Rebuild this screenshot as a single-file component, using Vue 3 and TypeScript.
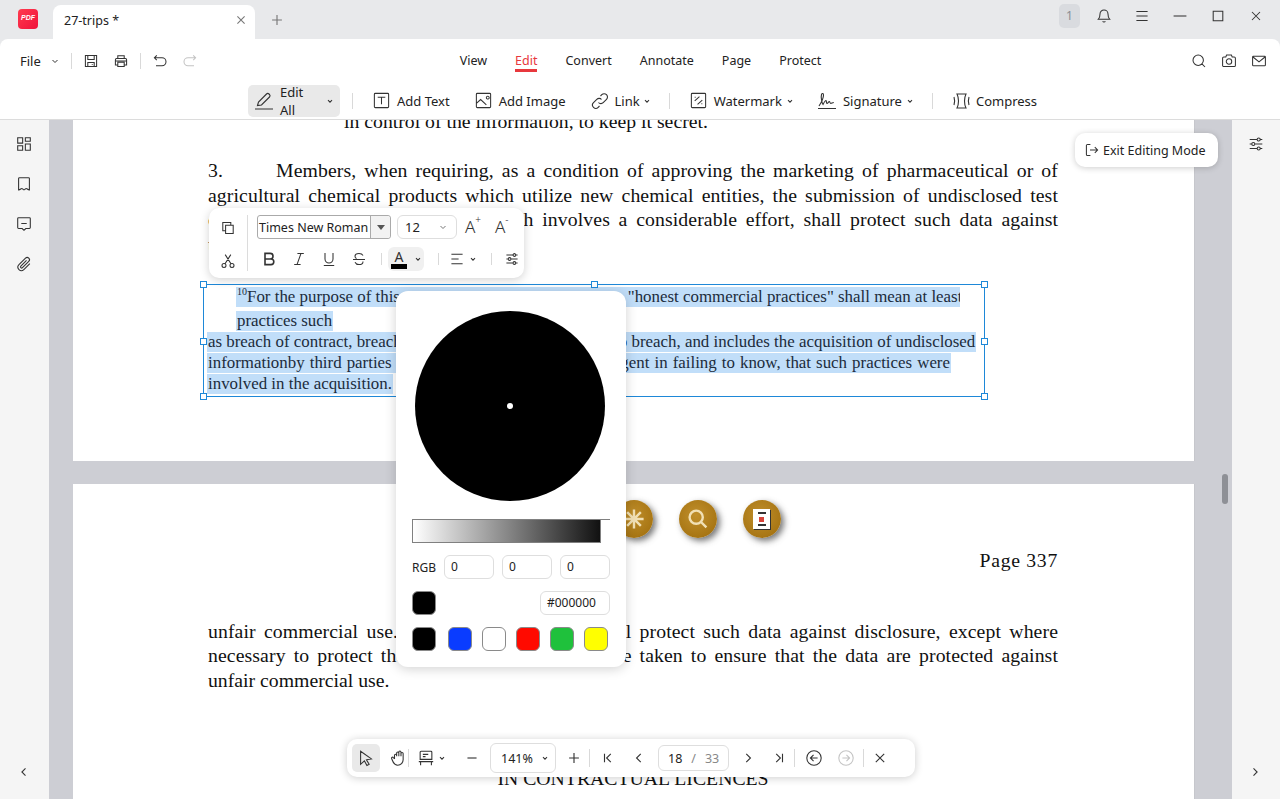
<script setup lang="ts">
// 图标路径，统一 20x20 画布
const icons: Record<string, string> = {
  save: 'M3 3h14v14H3zM6 3v5h8V3M6 17v-5h8v5M11 14.5h1',
  print: 'M6 7V3.5h8V7M3 8.5A1.5 1.5 0 0 1 4.5 7h11A1.5 1.5 0 0 1 17 8.5V15h-3M6 15H3V8.5M6 11.5h8V17H6zM3.5 10h13',
  undo: 'M6 3 3 6l3 3M3 6h9.5a4.5 4.5 0 0 1 0 10H5',
  redo: 'M14 3l3 3-3 3M17 6H7.5a4.5 4.5 0 0 0 0 10H15',
  bell: 'M10 2.5a5 5 0 0 0-5 5c0 4.5-2 6.5-2 6.5h14s-2-2-2-6.5a5 5 0 0 0-5-5zM8.3 16.5a2 2 0 0 0 3.4 0',
  menu: 'M3 4.5h14M3 10h14M3 15.500h14',
  search: 'M9 2.500a6.500 6.500 0 1 0 0 13 6.500 6.500 0 0 0 0-13zM13.700 13.700 17.500 17.500',
  camera: 'M3.500 5H6l1-2.500h6L14 5h2.500A1.500 1.500 0 0 1 18 6.500v9a1.500 1.500 0 0 1-1.500 1.500h-13A1.500 1.500 0 0 1 2 15.500v-9A1.500 1.500 0 0 1 3.500 5zM10 7.300a3.400 3.400 0 1 0 0 6.800 3.400 3.400 0 0 0 0-6.800z',
  mail: 'M3 4h14a1 1 0 0 1 1 1v10a1 1 0 0 1-1 1H3a1 1 0 0 1-1-1V5a1 1 0 0 1 1-1zM2.500 5 10 11l7.500-6',
  pen: 'M3.500 14.500 4.500 11 12.500 3a1.800 1.800 0 0 1 2.500 0l.5.5a1.800 1.800 0 0 1 0 2.500L7.500 14zM1 18h18',
  addText: 'M3.500 2.500h13a1 1 0 0 1 1 1v13a1 1 0 0 1-1 1h-13a1 1 0 0 1-1-1v-13a1 1 0 0 1 1-1zM6 6.500h8M10 6.500V14',
  addImage: 'M3.500 2.500h13a1 1 0 0 1 1 1v13a1 1 0 0 1-1 1h-13a1 1 0 0 1-1-1v-13a1 1 0 0 1 1-1zM2.500 13l4.500-4 6 5.500M13 7a1.500 1.500 0 1 0 0-.01',
  link: 'M8.500 11.500a3.200 3.200 0 0 0 4.700.2l3.300-3.300a3.300 3.300 0 0 0-4.700-4.700L10.500 5M11.500 8.500a3.200 3.200 0 0 0-4.700-.2l-3.300 3.300a3.300 3.300 0 0 0 4.700 4.700L9.500 15',
  watermark: 'M3.500 2.500h13a1 1 0 0 1 1 1v13a1 1 0 0 1-1 1h-13a1 1 0 0 1-1-1v-13a1 1 0 0 1 1-1zM6 10.500 11 6M9 14l5-4.500M6 6.500h1M13 13.500h1',
  sign: 'M1 17.500h18M2 15c2-3 4.500-8 4.500-11 0-2-1.500-2-2-.5-.7 2.500.3 8.500 1.500 10 .8-1.500 2-4 3-4 .8 0 0 3 1 3s1.500-2 2.300-2 .5 2 1.500 2 1.500-1 3-1',
  compress: 'M6 3h9c-1 2-1.500 4.500-1.500 7s.5 5 1.500 7H6c1-2 1.500-4.500 1.500-7S7 5 6 3zM3 6c.8 2.500.8 5.500 0 8M18 6c-.8 2.500-.8 5.500 0 8',
  exit: 'M8 3H4.500A1.500 1.500 0 0 0 3 4.500v11A1.500 1.500 0 0 0 4.500 17H8M7.500 10H17M13.500 6.500 17 10l-3.500 3.500',
  sliders: 'M3 5h8M15 5h2M3 10h2M9 10h8M3 15h8M15 15h2M13 3.300a1.700 1.700 0 1 0 0 3.400 1.700 1.700 0 0 0 0-3.400zM7 8.300a1.700 1.700 0 1 0 0 3.400 1.700 1.700 0 0 0 0-3.400zM13 13.300a1.700 1.700 0 1 0 0 3.400 1.700 1.700 0 0 0 0-3.400z',
  thumbs: 'M3 3h5.500v6H3zM11.500 3H17v4h-5.500zM3 12h5.500v5H3zM11.500 10H17v7h-5.500z',
  bookmark: 'M4 4a1 1 0 0 1 1-1h10a1 1 0 0 1 1 1v12.500c-2 0-2.500-1.500-3.500-1.500s-1.500 1.500-2.500 1.500-1.500-1.500-2.500-1.500S6 16.500 4 16.500z',
  comment: 'M4 3h12a1 1 0 0 1 1 1v10a1 1 0 0 1-1 1h-4l-2 2-2-2H4a1 1 0 0 1-1-1V4a1 1 0 0 1 1-1zM7 9.500h6',
  clip: 'M16.500 9.500 9.800 16.200a3.800 3.800 0 0 1-5.400-5.400l7.300-7.300a2.500 2.500 0 0 1 3.600 3.600l-7 7a1.200 1.200 0 0 1-1.800-1.800l6.300-6.200',
  copy: 'M7 6.500h9.500V17H7zM13.500 6.500V3H3.500v10.500H7',
  cut: 'M5 13a2.500 2.500 0 1 0 0 5 2.500 2.500 0 0 0 0-5zM15 13a2.500 2.500 0 1 0 0 5 2.500 2.500 0 0 0 0-5zM6.300 13.500 13.500 2M13.700 13.500 6.500 2',
  bold: 'M5 3h6.500a3.500 3.500 0 0 1 0 7H5zM5 10h7.500a3.500 3.500 0 0 1 0 7H5z',
  italic: 'M8 3h8M4 17h8M12.500 3 7.500 17',
  underline: 'M5 2.500v7.500a5 5 0 0 0 10 0V2.500M3.500 18h13',
  strike: 'M15 5.500C14 3.500 12 3 10 3 7 3 5 4.500 5 6.500c0 1.300.7 2.500 2 3M2.500 10.500h15M15 13c0 2.500-2 4-5 4-2.200 0-4-1-5-3',
  align: 'M3 4h14M3 10h9M3 16h14',
  cursor: 'M4 2.500 16 11l-5.500 1 3 5-2.500 1.300-2.800-5.200L4 17z',
  hand: 'M5 11V7a1.200 1.200 0 0 1 2.400 0M7.400 8V4.500a1.200 1.200 0 0 1 2.400 0V8M9.800 8V3.500a1.200 1.200 0 0 1 2.400 0V8M12.200 8V5a1.200 1.200 0 0 1 2.400 0V12a6 6 0 0 1-6 6c-3 0-4.500-1.500-6-5.500l-.8-2c-.4-1.200 1.300-2 2.100-.8L5 11',
  view: 'M4.500 2.500h11a1 1 0 0 1 1 1v8h-13v-8a1 1 0 0 1 1-1zM6.500 6h6M6.500 8.500h3M2 14h16M4 14v4M16 14v4',
  minus: 'M3.500 10h13',
  plus: 'M3 10h14M10 3v14',
  first: 'M5 4v12M14 4l-6 6 6 6',
  prev: 'M12.500 4l-6 6 6 6',
  next: 'M7.500 4l6 6-6 6',
  last: 'M15 4v12M6 4l6 6-6 6',
  back: 'M10 2a8 8 0 1 0 0 16 8 8 0 0 0 0-16zM14 10H6.500M9.500 6.500 6 10l3.500 3.500',
  forward: 'M10 2a8 8 0 1 0 0 16 8 8 0 0 0 0-16zM6 10h7.500M10.500 6.500 14 10l-3.500 3.500',
  close: 'M4 4l12 12M16 4 4 16',
  chevron: 'M5 8l5 5 5-5',
};

const tabs = ['View', 'Edit', 'Convert', 'Annotate', 'Page', 'Protect'];

// 文本框里的选中行，宽度取自原文排版
const boxLines = [
  { sup: '10', text: 'For the purpose of this provision, "a manner contrary to "honest commercial practices" shall mean at least', width: 724, indent: 29, gap: 0 },
  { sup: '', text: 'practices such', width: 97, indent: 29, gap: 4 },
  { sup: '', text: 'as breach of contract, breach of confidence and inducement to breach, and includes the acquisition of undisclosed', width: 769, indent: 0, gap: 1 },
  { sup: '', text: 'informationby third parties who knew, or were grossly negligent in failing to know, that such practices were', width: 744, indent: 0, gap: 1 },
  { sup: '', text: 'involved in the acquisition.', width: 186, indent: 0, gap: 1 },
];

const handles = ['tl', 'tc', 'tr', 'ml', 'mr', 'bl', 'bc', 'br'];
const swatches = ['#000000', '#0a3cff', '#ffffff', '#ff0a00', '#1fc13c', '#ffff00'];
</script>

<template>
  <div class="app">
    <!-- 标题栏 -->
    <header class="titlebar">
      <div class="logo"><span>PDF</span></div>
      <div class="tab">
        <span>27-trips *</span>
        <svg class="ic ic-12 muted" viewBox="0 0 20 20"><path :d="icons.close" /></svg>
      </div>
      <svg class="ic ic-14 new-tab muted" viewBox="0 0 20 20"><path :d="icons.plus" /></svg>
      <div class="win-btns">
        <span class="badge">1</span>
        <svg class="ic ic-16" viewBox="0 0 20 20"><path :d="icons.bell" /></svg>
        <svg class="ic ic-16" viewBox="0 0 20 20"><path :d="icons.menu" /></svg>
        <svg class="ic ic-16" viewBox="0 0 20 20"><path d="M2 10h16" /></svg>
        <svg class="ic ic-16" viewBox="0 0 20 20"><path d="M4 4h12v12H4z" /></svg>
        <svg class="ic ic-16" viewBox="0 0 20 20"><path d="M5 5l10 10M15 5 5 15" /></svg>
      </div>
    </header>

    <!-- 工具栏 -->
    <section class="toolbar">
      <div class="row-top">
        <div class="quick">
          <span class="file">File</span>
          <svg class="ic ic-10 chev-file" viewBox="0 0 20 20"><path :d="icons.chevron" /></svg>
          <i class="sep"></i>
          <svg class="ic ic-16" viewBox="0 0 20 20"><path :d="icons.save" /></svg>
          <svg class="ic ic-16" viewBox="0 0 20 20"><path :d="icons.print" /></svg>
          <i class="sep"></i>
          <svg class="ic ic-16" viewBox="0 0 20 20"><path :d="icons.undo" /></svg>
          <svg class="ic ic-16 disabled" viewBox="0 0 20 20"><path :d="icons.redo" /></svg>
        </div>
        <nav class="tabs">
          <span v-for="t in tabs" :key="t" :class="['nav-tab', { active: t === 'Edit' }]">{{ t }}</span>
        </nav>
        <div class="tools-right">
          <svg class="ic ic-16" viewBox="0 0 20 20"><path :d="icons.search" /></svg>
          <svg class="ic ic-16" viewBox="0 0 20 20"><path :d="icons.camera" /></svg>
          <svg class="ic ic-16" viewBox="0 0 20 20"><path :d="icons.mail" /></svg>
        </div>
      </div>
      <div class="row-edit">
        <div class="edit-all">
          <svg class="ic ic-20" viewBox="0 0 20 20"><path :d="icons.pen" /></svg>
          <span>Edit All</span>
          <svg class="ic ic-8" viewBox="0 0 20 20"><path :d="icons.chevron" /></svg>
        </div>
        <i class="sep sep-a"></i>
        <div class="tool t-text"><svg class="ic ic-19" viewBox="0 0 20 20"><path :d="icons.addText" /></svg><span>Add Text</span></div>
        <div class="tool t-image"><svg class="ic ic-19" viewBox="0 0 20 20"><path :d="icons.addImage" /></svg><span>Add Image</span></div>
        <div class="tool t-link"><svg class="ic ic-20" viewBox="0 0 20 20"><path :d="icons.link" /></svg><span>Link</span><svg class="ic ic-8 c" viewBox="0 0 20 20"><path :d="icons.chevron" /></svg></div>
        <i class="sep sep-b"></i>
        <div class="tool t-water"><svg class="ic ic-19" viewBox="0 0 20 20"><path :d="icons.watermark" /></svg><span>Watermark</span><svg class="ic ic-8 c" viewBox="0 0 20 20"><path :d="icons.chevron" /></svg></div>
        <div class="tool t-sign"><svg class="ic ic-20" viewBox="0 0 20 20"><path :d="icons.sign" /></svg><span>Signature</span><svg class="ic ic-8 c" viewBox="0 0 20 20"><path :d="icons.chevron" /></svg></div>
        <i class="sep sep-c"></i>
        <div class="tool t-comp"><svg class="ic ic-20" viewBox="0 0 20 20"><path :d="icons.compress" /></svg><span>Compress</span></div>
      </div>
    </section>

    <main class="main">
      <aside class="side side-left">
        <div class="side-icons">
          <svg class="ic ic-18" viewBox="0 0 20 20"><path :d="icons.thumbs" /></svg>
          <svg class="ic ic-18" viewBox="0 0 20 20"><path :d="icons.bookmark" /></svg>
          <svg class="ic ic-18" viewBox="0 0 20 20"><path :d="icons.comment" /></svg>
          <svg class="ic ic-18" viewBox="0 0 20 20"><path :d="icons.clip" /></svg>
        </div>
        <svg class="ic ic-12 side-arrow" viewBox="0 0 20 20"><path :d="icons.prev" /></svg>
      </aside>

      <div class="doc">
        <article class="page page-one">
          <p class="line first-line">in control of the information, to keep it secret.</p>
          <p class="line just para"><span class="num">3.</span>Members, when requiring, as a condition of approving the marketing of pharmaceutical or of</p>
          <p class="line just">agricultural chemical products which utilize new chemical entities, the submission of undisclosed test</p>
          <p class="line just">or other data, the origination of which involves a considerable effort, shall protect such data against</p>
          <p class="line">unfair commercial use.</p>

          <div class="textbox">
            <span v-for="h in handles" :key="h" :class="['handle', h]"></span>
            <div
              v-for="(l, i) in boxLines"
              :key="i"
              class="sel-line"
              :style="{ width: l.width + 'px', marginLeft: l.indent + 'px', marginTop: l.gap + 'px' }"
            ><sup v-if="l.sup">{{ l.sup }}</sup>{{ l.text }}</div>
          </div>
        </article>

        <article class="page page-two">
          <div class="gold-row">
            <span class="gold"></span>
            <span class="gold"></span>
            <span class="gold">
              <svg viewBox="0 0 20 20" class="gold-ic"><path d="M10 2v16M2 10h16M4.300 4.300l11.400 11.400M15.700 4.300 4.300 15.700" /></svg>
            </span>
            <span class="gold">
              <svg viewBox="0 0 20 20" class="gold-ic"><path d="M8.500 3a5.500 5.500 0 1 0 0 11 5.500 5.500 0 0 0 0-11zM12.500 12.500 17 17" /></svg>
            </span>
            <span class="gold">
              <span class="gold-card"><i></i><b></b><i></i></span>
            </span>
          </div>
          <p class="line page-no">Page 337</p>
          <p class="line just second-start">unfair commercial use. In addition, Members shall protect such data against disclosure, except where</p>
          <p class="line just">necessary to protect the public, or unless steps are taken to ensure that the data are protected against</p>
          <p class="line">unfair commercial use.</p>
          <p class="line section">SECTION 8: CONTROL OF ANTI-COMPETITIVE PRACTICES</p>
          <p class="line section">IN CONTRACTUAL LICENCES</p>
        </article>
      </div>

      <div class="scroll-thumb"></div>

      <aside class="side side-right">
        <div class="side-icons">
          <svg class="ic ic-18" viewBox="0 0 20 20"><path :d="icons.sliders" /></svg>
        </div>
        <svg class="ic ic-12 side-arrow" viewBox="0 0 20 20"><path :d="icons.next" /></svg>
      </aside>

      <!-- 退出编辑 -->
      <div class="exit-btn">
        <svg class="ic ic-16" viewBox="0 0 20 20"><path :d="icons.exit" /></svg>
        <span>Exit Editing Mode</span>
      </div>

      <!-- 字体浮动工具条 -->
      <div class="font-bar">
        <div class="fb-left">
          <svg class="ic ic-16" viewBox="0 0 20 20"><path :d="icons.copy" /></svg>
          <svg class="ic ic-16" viewBox="0 0 20 20"><path :d="icons.cut" /></svg>
        </div>
        <div class="fb-right">
          <div class="fb-row">
            <div class="combo"><span>Times New Roman</span><b><i></i></b></div>
            <div class="size"><span>12</span><svg class="ic ic-10 muted" viewBox="0 0 20 20"><path :d="icons.chevron" /></svg></div>
            <span class="grow">A<sup>+</sup></span>
            <span class="grow">A<sup>-</sup></span>
          </div>
          <div class="fb-row fb-row2">
            <svg class="ic ic-16 strong" viewBox="0 0 20 20"><path :d="icons.bold" /></svg>
            <svg class="ic ic-16" viewBox="0 0 20 20"><path :d="icons.italic" /></svg>
            <svg class="ic ic-16" viewBox="0 0 20 20"><path :d="icons.underline" /></svg>
            <svg class="ic ic-16" viewBox="0 0 20 20"><path :d="icons.strike" /></svg>
            <i class="sep sep-s"></i>
            <div class="color-btn">
              <span class="color-a">A<i></i></span>
              <svg class="ic ic-8" viewBox="0 0 20 20"><path :d="icons.chevron" /></svg>
            </div>
            <i class="sep sep-s"></i>
            <div class="align-btn">
              <svg class="ic ic-16" viewBox="0 0 20 20"><path :d="icons.align" /></svg>
              <svg class="ic ic-8" viewBox="0 0 20 20"><path :d="icons.chevron" /></svg>
            </div>
            <i class="sep sep-s"></i>
            <svg class="ic ic-16" viewBox="0 0 20 20"><path :d="icons.sliders" /></svg>
          </div>
        </div>
      </div>

      <!-- 取色器 -->
      <div class="picker">
        <div class="wheel"><i></i></div>
        <div class="shade"><div class="shade-bar"></div></div>
        <div class="rgb">
          <span>RGB</span>
          <div class="field">0</div>
          <div class="field">0</div>
          <div class="field">0</div>
        </div>
        <div class="current">
          <span class="swatch" style="background: #000000"></span>
          <div class="field hex">#000000</div>
        </div>
        <div class="swatches">
          <span v-for="c in swatches" :key="c" class="swatch" :style="{ background: c }"></span>
        </div>
      </div>

      <!-- 底部页面工具条 -->
      <div class="page-bar">
        <span class="pb-btn on"><svg class="ic ic-18" viewBox="0 0 20 20"><path :d="icons.cursor" /></svg></span>
        <svg class="ic ic-18 pb-hand" viewBox="0 0 20 20"><path :d="icons.hand" /></svg>
        <i class="sep sep-p"></i>
        <svg class="ic ic-18 pb-view" viewBox="0 0 20 20"><path :d="icons.view" /></svg>
        <svg class="ic ic-8 pb-chev" viewBox="0 0 20 20"><path :d="icons.chevron" /></svg>
        <svg class="ic ic-14 pb-minus" viewBox="0 0 20 20"><path :d="icons.minus" /></svg>
        <div class="zoom-box"><span>141%</span><svg class="ic ic-8" viewBox="0 0 20 20"><path :d="icons.chevron" /></svg></div>
        <svg class="ic ic-14 pb-plus" viewBox="0 0 20 20"><path :d="icons.plus" /></svg>
        <i class="sep sep-p"></i>
        <svg class="ic ic-14 pb-first" viewBox="0 0 20 20"><path :d="icons.first" /></svg>
        <svg class="ic ic-14 pb-prev" viewBox="0 0 20 20"><path :d="icons.prev" /></svg>
        <div class="page-box"><span>18</span><em>/</em><em>33</em></div>
        <svg class="ic ic-14 pb-next" viewBox="0 0 20 20"><path :d="icons.next" /></svg>
        <svg class="ic ic-14 pb-last" viewBox="0 0 20 20"><path :d="icons.last" /></svg>
        <i class="sep sep-p"></i>
        <svg class="ic ic-18 pb-back" viewBox="0 0 20 20"><path :d="icons.back" /></svg>
        <svg class="ic ic-18 pb-fwd disabled" viewBox="0 0 20 20"><path :d="icons.forward" /></svg>
        <i class="sep sep-p"></i>
        <svg class="ic ic-14 pb-close" viewBox="0 0 20 20"><path :d="icons.close" /></svg>
      </div>
    </main>
  </div>
</template>

<style>
html,
body {
  margin: 0;
  background: #e8e9eb;
}
</style>

<style scoped>
.app {
  width: 1280px;
  height: 799px;
  overflow: hidden;
  display: flex;
  flex-direction: column;
  background: #e8e9eb;
  font-family: "Noto Sans", "Open Sans", sans-serif;
  font-size: 13px;
  color: #222;
}

.ic {
  fill: none;
  stroke: #333;
  stroke-width: 1.3;
  flex: none;
  display: block;
}
.ic-8 { width: 8px; height: 8px; stroke-width: 2.6; }
.ic-10 { width: 10px; height: 10px; stroke-width: 2; }
.ic-12 { width: 12px; height: 12px; stroke-width: 1.8; }
.ic-14 { width: 14px; height: 14px; stroke-width: 1.6; }
.ic-16 { width: 16px; height: 16px; }
.ic-18 { width: 18px; height: 18px; stroke-width: 1.2; }
.ic-19 { width: 19px; height: 19px; stroke-width: 1.1; }
.ic-20 { width: 20px; height: 20px; stroke-width: 1.1; }
.muted { stroke: #777; }
.disabled { stroke: #c4c4c4; }
.strong { stroke-width: 2; }

.sep {
  display: block;
  width: 1px;
  height: 16px;
  background: #d9d9d9;
  flex: none;
}

/* 标题栏 */
.titlebar {
  height: 39px;
  flex: none;
  display: flex;
  align-items: flex-end;
  padding-left: 18px;
}
.logo {
  width: 20px;
  height: 20px;
  margin-bottom: 10px;
  border-radius: 4px;
  background: linear-gradient(135deg, #ff3b4e, #f0123c);
  display: flex;
  align-items: center;
  justify-content: center;
}
.logo span {
  color: #fff;
  font: italic 700 7px "Liberation Sans", sans-serif;
  margin-top: -4px;
}
.tab {
  width: 202px;
  height: 34px;
  margin-left: 15px;
  box-sizing: border-box;
  padding: 0 8px 4px 11px;
  background: #fff;
  border-radius: 8px 8px 0 0;
  display: flex;
  align-items: center;
  justify-content: space-between;
  font-size: 12.5px;
}
.new-tab {
  margin: 0 0 12px 15px;
}
.win-btns {
  margin-left: auto;
  display: flex;
  align-items: center;
  height: 39px;
  padding-bottom: 8px;
  box-sizing: border-box;
  padding-right: 16px;
  gap: 22px;
}
.badge {
  width: 21px;
  height: 24px;
  border-radius: 5px;
  background: #d9dbdf;
  color: #8a8d93;
  font-size: 12px;
  display: flex;
  align-items: center;
  justify-content: center;
  margin-right: -6px;
}
.win-btns svg + svg { margin-left: 0; }

/* 工具栏 */
.toolbar {
  height: 81px;
  flex: none;
  box-sizing: border-box;
  background: #fff;
  border-bottom: 1px solid #dcdcdc;
  border-radius: 8px 8px 0 0;
}
.row-top {
  height: 43px;
  display: grid;
  grid-template-columns: 1fr auto 1fr;
  align-items: center;
}
.quick {
  display: flex;
  align-items: center;
  padding-left: 20px;
}
.file { margin-right: 9px; }
.quick .sep { margin: 0 11px 0 11px; }
.quick .ic-16 + .ic-16 { margin-left: 14px; }
.chev-file { margin-right: 0; }
.tabs {
  display: flex;
  gap: 28px;
  margin-left: 1px;
}
.nav-tab {
  position: relative;
  font-size: 12.5px;
}
.nav-tab.active { color: #e8383d; }
.nav-tab.active::after {
  content: "";
  position: absolute;
  left: 0;
  right: 0;
  bottom: -3px;
  height: 3px;
  background: #e8383d;
}
.tools-right {
  justify-self: end;
  display: flex;
  gap: 14px;
  padding-right: 13px;
}
.row-edit {
  height: 37px;
  display: flex;
  align-items: center;
  padding-left: 248px;
}
.edit-all {
  width: 92px;
  height: 32px;
  box-sizing: border-box;
  padding: 0 6px;
  border-radius: 5px;
  background: #e9e9e9;
  display: flex;
  align-items: center;
  gap: 6px;
}
.tool {
  display: flex;
  align-items: center;
  gap: 6px;
}
.tool .c { margin-left: -2px; }
.sep-a { margin: 0 10px 0 12px; height: 16px; }
.t-text { margin-left: 9px; }
.t-image { margin-left: 24px; }
.t-link { margin-left: 24px; gap: 5px; }
.sep-b { margin-left: 18px; }
.t-water { margin-left: 19px; gap: 6px; }
.t-sign { margin-left: 23px; }
.sep-c { margin-left: 18px; }
.t-comp { margin-left: 18px; gap: 5px; }

/* 主区 */
.main {
  position: relative;
  flex: 1;
  min-height: 0;
  display: flex;
}
.side {
  width: 48px;
  flex: none;
  background: #f5f5f5;
  position: relative;
}
.side-left { width: 49px; }
.side-icons {
  display: flex;
  flex-direction: column;
  align-items: center;
  gap: 22px;
  padding-top: 15px;
}
.side-left .side-icons { padding-right: 1px; }
.side-arrow {
  position: absolute;
  left: 50%;
  margin-left: -7px;
  bottom: 21px;
}
.doc {
  flex: 1;
  min-width: 0;
  background: #cdced4;
  padding: 0 37px 0 24px;
  overflow: hidden;
}
.page {
  background: #fff;
  box-sizing: border-box;
  padding: 0 136px 0 135px;
  font-family: "Liberation Serif", "Times New Roman", serif;
  font-size: 19.74px;
  color: #111;
  position: relative;
}
.page-one {
  height: 341px;
  overflow: hidden;
  border-right: 1px solid #c6c7cc;
}
.page-two {
  margin-top: 23px;
  height: 330px;
  overflow: hidden;
  border-right: 1px solid #c6c7cc;
}
.line {
  margin: 0;
  line-height: 24.5px;
  white-space: nowrap;
}
.just {
  white-space: normal;
  text-align: justify;
  text-align-last: justify;
  height: 24.5px;
  letter-spacing: 0.1px;
}
.first-line {
  margin-top: -11px;
  padding-left: 136px;
}
.para { margin-top: 24.5px; }
.num {
  display: inline-block;
  width: 68px;
  text-align-last: left;
}

/* 文本框 */
.textbox {
  position: relative;
  margin: 27.500px 0 0 -5px;
  width: 782px;
  height: 113px;
  box-sizing: border-box;
  border: 1px solid #1e88d8;
  padding: 2px 0 0 3px;
  font-size: 16.9px;
  color: #1c2c3c;
}
.sel-line {
  height: 20px;
  line-height: 20px;
  background: #c1def9;
  padding: 0 1px;
  box-sizing: border-box;
  text-align: justify;
  text-align-last: justify;
  white-space: nowrap;
  overflow: hidden;
}
.sel-line sup {
  font-size: 10px;
  line-height: 0;
}
.handle {
  position: absolute;
  width: 5px;
  height: 5px;
  background: #fff;
  border: 1px solid #1e88d8;
}
.tl, .tc, .tr { top: -4px; }
.ml, .mr { top: 53px; }
.bl, .bc, .br { bottom: -4px; }
.tl, .ml, .bl { left: -4px; }
.tc, .bc { left: 387px; }
.tr, .mr, .br { right: -4px; }

/* 第二页 */
.gold-row {
  display: flex;
  justify-content: center;
  gap: 26px;
  padding-top: 16px;
  margin: 0 -135px 0 -135px;
  padding-left: 1px;
}
.gold {
  width: 38px;
  height: 38px;
  border-radius: 50%;
  background: radial-gradient(circle at 45% 40%, #c08f2c, #a87614 70%, #8a5e0c);
  box-shadow: 3px 3px 6px rgba(60, 60, 60, 0.7);
  display: flex;
  align-items: center;
  justify-content: center;
}
.gold-ic {
  width: 24px;
  height: 24px;
  fill: none;
  stroke: #f1e0b5;
  stroke-width: 2;
}
.gold-card {
  width: 17px;
  height: 20px;
  background: #fff;
  box-shadow: 1px 1px 0 #333;
  display: flex;
  flex-direction: column;
  align-items: center;
  justify-content: space-between;
  padding: 3px 0;
  box-sizing: border-box;
}
.gold-card i {
  width: 8px;
  height: 2px;
  background: #333;
}
.gold-card b {
  width: 5px;
  height: 5px;
  background: #d8443a;
}
.page-no {
  margin-top: 9.500px;
  text-align: right;
  letter-spacing: 0.7px;
}
.second-start { margin-top: 46.500px; }
.section {
  text-align: center;
  margin: 0 -20px;
}
.section:nth-last-child(2) { margin-top: 49px; }

.scroll-thumb {
  position: absolute;
  left: 1222px;
  top: 354px;
  width: 6px;
  height: 30px;
  border-radius: 3px;
  background: #8e9096;
}

/* 退出编辑按钮 */
.exit-btn {
  position: absolute;
  left: 1075px;
  top: 13px;
  width: 143px;
  height: 34px;
  box-sizing: border-box;
  padding-left: 9px;
  display: flex;
  align-items: center;
  gap: 3px;
  background: #fff;
  border-radius: 10px;
  box-shadow: 0 1px 6px rgba(0, 0, 0, 0.2);
  font-size: 12.5px;
  white-space: nowrap;
}

/* 字体工具条 */
.font-bar {
  position: absolute;
  left: 209px;
  top: 88px;
  width: 315px;
  height: 70px;
  box-sizing: border-box;
  background: #fff;
  border-radius: 10px;
  box-shadow: 0 2px 10px rgba(0, 0, 0, 0.18);
  display: flex;
  padding-top: 7px;
}
.fb-left {
  width: 39px;
  height: 56px;
  border-right: 1px solid #dcdcdc;
  display: flex;
  flex-direction: column;
  align-items: center;
  justify-content: space-between;
  padding: 5px 0 2px;
  box-sizing: border-box;
  flex: none;
  margin-right: 9px;
}
.fb-right { flex: 1; }
.fb-row {
  display: flex;
  align-items: center;
  height: 24px;
}
.combo {
  width: 134px;
  height: 24px;
  box-sizing: border-box;
  border: 1px solid #aaa;
  border-radius: 3px;
  display: flex;
  align-items: center;
  justify-content: space-between;
  padding-left: 1px;
  font-size: 12.5px;
  white-space: nowrap;
}
.combo b {
  width: 19px;
  height: 100%;
  border-left: 1px solid #aaa;
  background: #f2f2f2;
  border-radius: 0 3px 3px 0;
  display: flex;
  align-items: center;
  justify-content: center;
}
.combo b i {
  width: 0;
  height: 0;
  border-left: 4px solid transparent;
  border-right: 4px solid transparent;
  border-top: 5px solid #555;
}
.size {
  width: 60px;
  height: 24px;
  box-sizing: border-box;
  margin-left: 6px;
  border: 1px solid #dedede;
  border-radius: 6px;
  display: flex;
  align-items: center;
  justify-content: space-between;
  padding: 0 8px 0 7px;
}
.grow {
  width: 20px;
  margin-left: 8px;
  font-size: 17px;
  line-height: 24px;
  font-weight: 300;
  color: #333;
  white-space: nowrap;
}
.grow + .grow { margin-left: 10px; }
.grow sup {
  font-size: 10px;
  line-height: 0;
  vertical-align: 10px;
}
.fb-row2 {
  margin-top: 8px;
  gap: 14px;
  padding-left: 4px;
}
.sep-s { margin: 0 -2px 0 0; height: 12px; }
.color-btn {
  width: 36px;
  height: 24px;
  margin-left: -6px;
  border-radius: 6px;
  background: #f0f0f0;
  display: flex;
  align-items: center;
  gap: 7px;
  padding-left: 3px;
  box-sizing: border-box;
}
.color-a {
  width: 16px;
  text-align: center;
  line-height: 14px;
  font-size: 14px;
  color: #333;
  position: relative;
  padding-bottom: 5px;
}
.color-a i {
  position: absolute;
  left: 0;
  right: 0;
  bottom: 0;
  height: 5px;
  background: #000;
}
.align-btn {
  display: flex;
  align-items: center;
  gap: 4px;
  margin-left: -2px;
}

/* 取色器 */
.picker {
  position: absolute;
  left: 396px;
  top: 171px;
  width: 230px;
  height: 376px;
  box-sizing: border-box;
  background: #fff;
  border-radius: 12px;
  box-shadow: 0 2px 12px rgba(0, 0, 0, 0.18);
  padding: 20px 16px 0;
}
.wheel {
  width: 190px;
  height: 190px;
  margin: 0 0 0 3px;
  border-radius: 50%;
  background: #000;
  position: relative;
}
.wheel i {
  position: absolute;
  left: 92px;
  top: 92px;
  width: 6px;
  height: 6px;
  border-radius: 50%;
  background: #fff;
}
.shade {
  margin-top: 18px;
  width: 198px;
  height: 24px;
  border-top: 1px solid #808080;
  box-sizing: border-box;
}
.shade-bar {
  width: 189px;
  height: 23px;
  box-sizing: border-box;
  border: 1px solid #808080;
  border-top: 0;
  background: linear-gradient(90deg, #fff, #111);
}
.rgb {
  margin-top: 12px;
  display: flex;
  align-items: center;
  gap: 8px;
  font-size: 12px;
}
.rgb span { margin-right: -2px; width: 26px; }
.field {
  width: 50px;
  height: 24px;
  box-sizing: border-box;
  border: 1px solid #dedede;
  border-radius: 6px;
  padding-left: 6px;
  line-height: 22px;
  font-size: 12px;
}
.current {
  margin-top: 12px;
  display: flex;
  justify-content: space-between;
  width: 198px;
}
.hex {
  width: 70px;
}
.swatch {
  display: block;
  width: 24px;
  height: 24px;
  box-sizing: border-box;
  border: 1px solid #8a8a8a;
  border-radius: 6px;
}
.swatches {
  margin-top: 12px;
  display: flex;
  gap: 10px;
}
.swatches .swatch:nth-child(2) { margin-left: 2px; }

/* 底部工具条 */
.page-bar {
  position: absolute;
  left: 347px;
  top: 619px;
  width: 568px;
  height: 38px;
  box-sizing: border-box;
  background: #fff;
  border-radius: 10px;
  box-shadow: 0 1px 8px rgba(0, 0, 0, 0.2);
  display: flex;
  align-items: center;
  padding-left: 5px;
}
.pb-btn {
  width: 28px;
  height: 28px;
  border-radius: 5px;
  display: flex;
  align-items: center;
  justify-content: center;
}
.pb-btn.on { background: #e9e9e9; }
.pb-hand { margin-left: 10px; }
.sep-p { height: 18px; }
.page-bar .sep-p:nth-of-type(1) { margin-left: 0; }
.page-bar > .sep-p { margin: 0 8px 0 8px; }
.pb-view { margin-left: 0; }
.pb-chev { margin-left: 3px; }
.pb-minus { margin-left: 19px; }
.zoom-box {
  width: 66px;
  height: 30px;
  margin-left: 11px;
  box-sizing: border-box;
  border: 1px solid #dedede;
  border-radius: 6px;
  display: flex;
  align-items: center;
  justify-content: space-between;
  padding: 0 6px 0 10px;
  font-size: 12.5px;
}
.pb-plus { margin-left: 11px; }
.pb-first { margin-left: 3px; }
.pb-prev { margin-left: 17px; }
.page-box {
  width: 71px;
  height: 26px;
  margin-left: 12px;
  box-sizing: border-box;
  border: 1px solid #dedede;
  border-radius: 6px;
  display: flex;
  align-items: center;
  padding-left: 9px;
  gap: 9px;
  font-size: 12.5px;
}
.page-box em {
  font-style: normal;
  color: #888;
}
.pb-next { margin-left: 12px; }
.pb-last { margin-left: 17px; }
.pb-back { margin-left: 2px; }
.pb-fwd { margin-left: 14px; }
.pb-close { margin-left: 1px; }
</style>
